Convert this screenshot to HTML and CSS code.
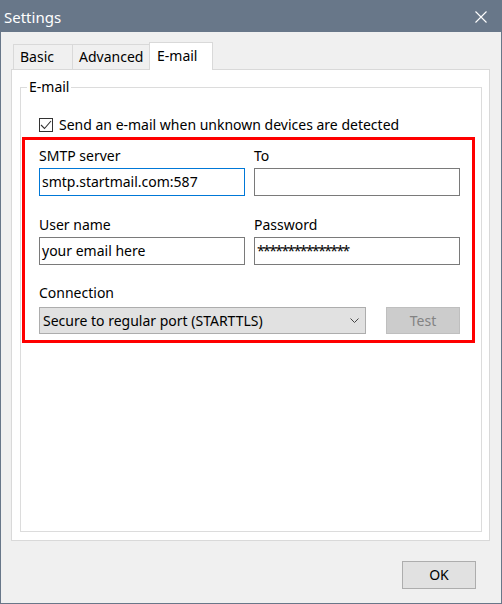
FILE: index.html
```
<!DOCTYPE html>
<html>
<head>
<meta charset="utf-8">
<link rel="stylesheet" href="styles.css">
</head>
<body>
<div class="window">
  <div class="titlebar">
    <span class="title">Settings</span>
    <svg class="close" width="12" height="12" viewBox="0 0 12 12"><path d="M0.5 0.5 L11.5 11.5 M11.5 0.5 L0.5 11.5" stroke="#ffffff" stroke-width="1.1" fill="none"/></svg>
  </div>
  <div class="client">
    <div class="tabs">
      <div class="tab tab-basic">Basic</div>
      <div class="tab tab-adv">Advanced</div>
      <div class="tab tab-active">E-mail</div>
    </div>
    <div class="panel">
      <div class="group">
        <span class="legend">E-mail</span>
        <div class="check-row">
          <span class="checkbox"><svg width="12" height="12" viewBox="0 0 12 12"><path d="M1 6 L4.5 9.5 L11 2" stroke="#333333" stroke-width="1.1" fill="none"/></svg></span>
          <span>Send an e-mail when unknown devices are detected</span>
        </div>
        <div class="highlight">
          <div class="fields">
            <div class="field">
              <div class="label">SMTP server</div>
              <div class="input focused">smtp.startmail.com:587</div>
            </div>
            <div class="field">
              <div class="label">To</div>
              <div class="input"></div>
            </div>
            <div class="field">
              <div class="label">User name</div>
              <div class="input">your email here</div>
            </div>
            <div class="field">
              <div class="label">Password</div>
              <div class="input password">***************</div>
            </div>
          </div>
          <div class="label conn-label">Connection</div>
          <div class="conn-row">
            <div class="select">
              <span>Secure to regular port (STARTTLS)</span>
              <svg width="9" height="5" viewBox="0 0 9 5"><path d="M0.5 0.5 L4.5 4.5 L8.5 0.5" stroke="#444444" stroke-width="1" fill="none"/></svg>
            </div>
            <div class="btn btn-disabled">Test</div>
          </div>
        </div>
      </div>
    </div>
    <div class="footer">
      <div class="btn btn-ok">OK</div>
    </div>
  </div>
</div>
</body>
</html>
```
FILE: styles.css
```
html, body {
  margin: 0;
  padding: 0;
  background: #ffffff;
}
body {
  font-family: "Noto Sans", "Open Sans", sans-serif;
  font-size: 14px;
  line-height: 20px;
  color: #000000;
}
.window {
  width: 502px;
  height: 604px;
  box-sizing: border-box;
  border: 1px solid #687789;
  border-top: 0;
  display: flex;
  flex-direction: column;
  background: #f0f0f0;
}
.titlebar {
  height: 32px;
  flex: none;
  background: #687789;
  display: flex;
  align-items: center;
  padding-left: 3px;
  color: #ffffff;
  font-size: 15px;
}
.title {
  margin-top: 1px;
}
.close {
  margin-left: auto;
  margin-right: 14px;
  margin-top: 1px;
}
.client {
  flex: 1;
  display: flex;
  flex-direction: column;
}
.tabs {
  display: flex;
  align-items: flex-end;
  height: 28px;
  margin: 10px 0 -1px 12px;
  position: relative;
  z-index: 1;
}
.tab {
  box-sizing: border-box;
  height: 25px;
  margin-bottom: 1px;
  border: 1px solid #d9d9d9;
  border-bottom: 0;
  background: #f0f0f0;
  padding: 2px 0 0 6px;
}
.tab-basic {
  width: 60px;
}
.tab-adv {
  width: 78px;
  margin-left: -1px;
}
.tab-active {
  width: 64px;
  height: 28px;
  margin-bottom: 0;
  margin-left: -1px;
  background: #ffffff;
  padding: 3px 0 0 7px;
}
.panel {
  margin-left: 10px;
  width: 479px;
  height: 472px;
  box-sizing: border-box;
  border: 1px solid #d9d9d9;
  background: #ffffff;
  padding: 17px 7px 8px 8px;
  display: flex;
  flex-direction: column;
}
.group {
  flex: 1;
  position: relative;
  border: 1px solid #dcdcdc;
}
.legend {
  position: absolute;
  left: 6px;
  top: -11px;
  padding: 0 2px;
  background: #ffffff;
}
.check-row {
  display: flex;
  align-items: center;
  margin: 27px 0 0 18px;
}
.checkbox {
  width: 14px;
  height: 14px;
  box-sizing: border-box;
  border: 1px solid #333333;
  display: flex;
  align-items: center;
  justify-content: center;
  margin-right: 6px;
  margin-top: -1px;
}
.highlight {
  margin: 2px 0 0 1px;
  width: 453px;
  box-sizing: border-box;
  border: 3px solid #ff0000;
  padding: 6px 12px 6px 14px;
}
.fields {
  display: grid;
  grid-template-columns: 206px 206px;
  column-gap: 9px;
  row-gap: 19px;
}
.label {
  margin-bottom: 2px;
}
.input {
  box-sizing: border-box;
  height: 28px;
  border: 1px solid #7a7a7a;
  padding: 0 3px 0 2px;
  display: flex;
  align-items: center;
  background: #ffffff;
  white-space: nowrap;
}
.input.focused {
  border-color: #0078d7;
}
.input.password {
  letter-spacing: -1.6px;
}
.conn-label {
  margin-top: 18px;
  margin-bottom: 4px;
}
.conn-row {
  display: flex;
  gap: 20px;
}
.select {
  box-sizing: border-box;
  width: 327px;
  height: 27px;
  border: 1px solid #adadad;
  background: #e1e1e1;
  display: flex;
  align-items: center;
  justify-content: space-between;
  padding: 0 6px 0 3px;
}
.btn {
  box-sizing: border-box;
  width: 74px;
  height: 27px;
  display: flex;
  align-items: center;
  justify-content: center;
}
.btn-disabled {
  background: #cccccc;
  border: 1px solid #bfbfbf;
  color: #838383;
}
.footer {
  display: flex;
  justify-content: flex-end;
  padding: 20px 25px 0 0;
}
.btn-ok {
  height: 28px;
  background: #e1e1e1;
  border: 1px solid #adadad;
}
```
